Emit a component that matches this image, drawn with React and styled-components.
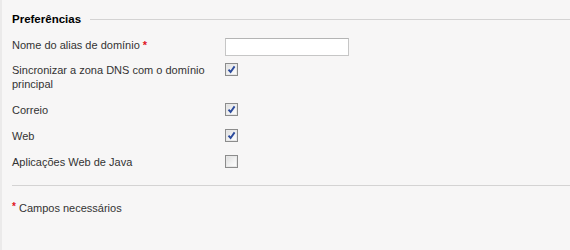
import React from 'react';
import styled, { createGlobalStyle } from 'styled-components';

const GlobalStyle = createGlobalStyle`
  html, body {
    margin: 0;
    padding: 0;
    background: #f7f6f6;
  }
  body {
    font-family: Tahoma, "Liberation Sans", Arial, sans-serif;
    font-size: 11px;
    color: #333;
  }
`;

const FIELDS = [
  { label: 'Sincronizar a zona DNS com o domínio principal', checked: true },
  { label: 'Correio', checked: true },
  { label: 'Web', checked: true },
  { label: 'Aplicações Web de Java', checked: false },
];

const Page = styled.div`
  width: 570px;
  height: 250px;
  box-sizing: border-box;
  border-left: 2px solid #ebeaea;
  padding: 12px 0 0 10px;
`;

const Legend = styled.div`
  display: flex;
  align-items: center;
  height: 14px;
  line-height: 14px;
`;

const LegendText = styled.span`
  font-weight: bold;
  font-size: 11.5px;
  color: #000;
`;

const LegendRule = styled.div`
  flex: 1;
  height: 1px;
  background: #d4d3d3;
  margin: 1px 0 0 9px;
`;

const Form = styled.div`
  margin-top: 6px;
`;

const Row = styled.div`
  display: grid;
  grid-template-columns: 213px 1fr;
  align-items: start;
  padding: 6px 0;
  line-height: 14px;
  &:first-child {
    padding-top: 6px;
    padding-bottom: 5px;
  }
`;

const Label = styled.div`
  width: 195px;
`;

const Control = styled.div`
  display: flex;
  align-items: flex-start;
  height: 14px;
`;

const Star = styled.span`
  color: #e0141e;
  font-weight: bold;
  font-size: ${(props) => (props.small ? '10px' : '11px')};
  vertical-align: ${(props) => (props.small ? '2px' : 'top')};
  line-height: 14px;
`;

const TextInput = styled.input`
  display: block;
  box-sizing: border-box;
  flex: none;
  width: 124px;
  height: 18px;
  margin: 0;
  padding: 0 3px;
  border: 1px solid #c6c6c6;
  border-top-color: #b4b4b4;
  background: #fff;
  font: inherit;
  outline: none;
`;

const Box = styled.span`
  display: flex;
  flex: none;
  align-items: center;
  justify-content: center;
  box-sizing: border-box;
  width: 13px;
  height: 13px;
  border: 1px solid #8c8c8c;
  background: linear-gradient(135deg, #dcdcdc 0%, #f4f4f4 60%, #ffffff 100%);
  box-shadow: inset 0 0 0 1px #e8e8e8;
`;

const Rule = styled.div`
  height: 1px;
  background: #d4d3d3;
  margin: 10px 0 0;
`;

const Note = styled.div`
  margin-top: 14px;
  line-height: 14px;
`;

const Checkbox = ({ checked }) => (
  <Box>
    {checked && (
      <svg width="9" height="9" viewBox="0 0 9 9">
        <path d="M1.5 4.6 L3.6 7 L7.6 1.4" fill="none" stroke="#2b4a9c" strokeWidth="1.9" />
      </svg>
    )}
  </Box>
);

const App = () => (
  <Page>
    <GlobalStyle />
    <Legend>
      <LegendText>Preferências</LegendText>
      <LegendRule />
    </Legend>
    <Form>
      <Row>
        <Label>
          Nome do alias de domínio <Star>*</Star>
        </Label>
        <Control>
          <TextInput type="text" />
        </Control>
      </Row>
      {FIELDS.map((field) => (
        <Row key={field.label}>
          <Label>{field.label}</Label>
          <Control>
            <Checkbox checked={field.checked} />
          </Control>
        </Row>
      ))}
    </Form>
    <Rule />
    <Note>
      <Star small>*</Star> Campos necessários
    </Note>
  </Page>
);

export default App;
